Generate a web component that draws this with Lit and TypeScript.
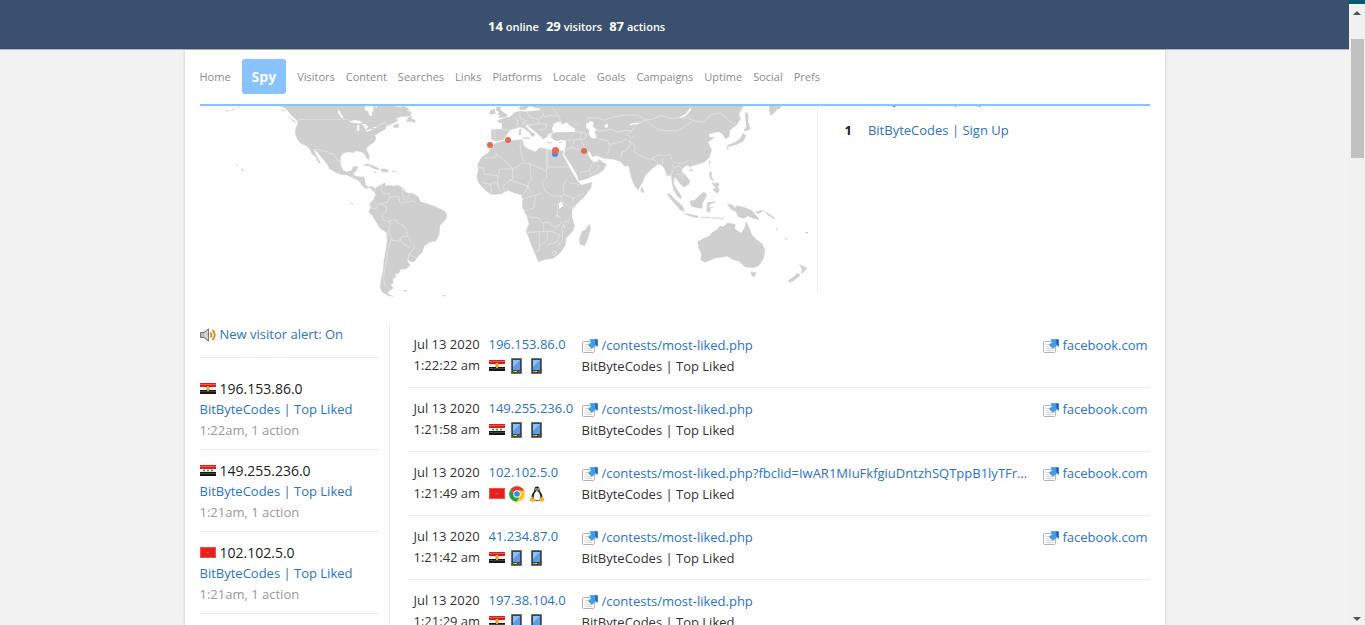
import { LitElement, html, svg, css } from "lit";
import { customElement, property } from "lit/decorators.js";

type Flag = "eg" | "iq" | "ma";

interface Action {
  time: string;
  ip: string;
  flag: Flag;
  agents: string[];
  url: string;
  referrer?: string;
}

const NAV = ["Home", "Spy", "Visitors", "Content", "Searches", "Links", "Platforms", "Locale", "Goals", "Campaigns", "Uptime", "Social", "Prefs"];

const VISITORS: { ip: string; flag: Flag; seen: string }[] = [
  { ip: "196.153.86.0", flag: "eg", seen: "1:22am, 1 action" },
  { ip: "149.255.236.0", flag: "iq", seen: "1:21am, 1 action" },
  { ip: "102.102.5.0", flag: "ma", seen: "1:21am, 1 action" },
];

const PAGE = "/contests/most-liked.php";
const ACTIONS: Action[] = [
  { time: "1:22:22 am", ip: "196.153.86.0", flag: "eg", agents: ["phone", "phone"], url: PAGE, referrer: "facebook.com" },
  { time: "1:21:58 am", ip: "149.255.236.0", flag: "iq", agents: ["phone", "phone"], url: PAGE, referrer: "facebook.com" },
  { time: "1:21:49 am", ip: "102.102.5.0", flag: "ma", agents: ["chrome", "linux"], url: PAGE + "?fbclid=IwAR1MIuFkfgiuDntzhSQTppB1lyTFrfIP…", referrer: "facebook.com" },
  { time: "1:21:42 am", ip: "41.234.87.0", flag: "eg", agents: ["phone", "phone"], url: PAGE, referrer: "facebook.com" },
  { time: "1:21:29 am", ip: "197.38.104.0", flag: "eg", agents: ["phone", "phone"], url: PAGE },
];

const flagIcon = (kind: Flag) => html`<svg class="flag" viewBox="0 0 16 11" aria-hidden="true">
  ${kind === "ma"
    ? svg`<rect width="16" height="11" fill="#e8201c"/><rect x=".5" y=".5" width="15" height="10" fill="none" stroke="#f4504a"/><path d="M8 3.400l.7 1.500h1.500L9 5.900l.5 1.600L8 6.600l-1.500.9.5-1.600-1.200-1h1.500z" fill="#b5562a"/>`
    : svg`<rect width="16" height="11" fill="#f4f4f4"/><rect width="16" height="4" fill="#e01b1b"/><rect y="1" width="16" height="1" fill="#f05a5a"/><rect y="7" width="16" height="4" fill="#161616"/><rect y="8" width="16" height="1" fill="#444"/>
      ${kind === "eg"
        ? svg`<path d="M6 4h4v3H6z" fill="#ecc766"/><path d="M7 3h2v5H7z" fill="#e3a92c"/>`
        : svg`<path d="M3 4h2v3H3zM7 4h2v3H7zM11 4h2v3h-2z" fill="#a9dcae"/><path d="M3 5h2v1H3zM7 5h2v1H7zM11 5h2v1h-2z" fill="#3fa54c"/>`}`}
</svg>`;

const agentIcon = (kind: string) => {
  if (kind === "chrome")
    return html`<svg class="agent" viewBox="0 0 16 16" aria-hidden="true">
      <circle cx="8" cy="8" r="7.800" fill="#fbc919"/>
      <path d="M8 8L1.200 4.200A7.800 7.800 0 0 0 7.500 15.800L11.300 9.500z" fill="#28a04b"/>
      <path d="M8 8L1.200 4.200A7.800 7.800 0 0 1 15 4.500H8z" fill="#e0392d"/>
      <circle cx="8" cy="8" r="3.700" fill="#fff"/><circle cx="8" cy="8" r="2.800" fill="#3f83ea"/>
    </svg>`;
  if (kind === "linux")
    return html`<svg class="agent" viewBox="0 0 16 16" aria-hidden="true">
      <path d="M8 .4c2 0 2.700 1.500 2.600 3.400 0 1.800 2.900 4 2.900 7.500 0 2.500-1.500 3.600-5.500 3.600s-5.500-1.100-5.500-3.600c0-3.500 2.900-5.700 2.900-7.500C5.300 1.900 6 .4 8 .4z" fill="#222"/>
      <path d="M8 5c1.500 0 3.300 3.500 3.300 6s-1.300 3.300-3.300 3.300-3.300-.8-3.300-3.300S6.500 5 8 5z" fill="#fafafa"/>
      <circle cx="7" cy="3" r=".8" fill="#fff"/><circle cx="9.200" cy="3" r=".8" fill="#fff"/>
      <path d="M6.600 4.200h3l-1.500 1.500z" fill="#f0a818"/>
      <path d="M3.300 10.500l2.900 3.600c0 1.800-2 2-3.300 1.300L.6 14.600l.8-2.900zM12.700 10.500l-2.900 3.600c0 1.800 2 2 3.300 1.300l2.500-1.200-1.200-2.500z" fill="#f3b325"/>
    </svg>`;
  return html`<svg class="agent" viewBox="0 0 16 16" aria-hidden="true">
    <rect x="2" y="0" width="11" height="16" rx="1" fill="#676f78"/>
    <rect x="3" y="1" width="9" height="14" fill="#3b434c"/>
    <rect x="4" y="2" width="7" height="10" fill="#5e9be0"/>
    <path d="M4 2h7L4 9z" fill="#8fc0f4"/>
    <rect x="4" y="13" width="2" height="1" fill="#72cf3a"/><rect x="6" y="13" width="2" height="1" fill="#e8e04a"/><rect x="9" y="13" width="2" height="1" fill="#e0392d"/>
  </svg>`;
};

const linkIcon = () => html`<svg class="goto" viewBox="0 0 16 14" aria-hidden="true">
  <rect x=".5" y="2.500" width="12" height="11" rx="1" fill="#fbfbfb" stroke="#b4b4b4"/>
  <path d="M3 5.500h4M3 7.500h3M3 9.500h7M3 11.500h7" stroke="#d9d9d9"/>
  <path d="M8 .5h7.500V7.500L13.500 6.200 9.800 9.500 6.300 5.900l3.300-2.600z" fill="#3da0e6" stroke="#2a86d0" stroke-width=".5"/>
  <path d="M13 .5h2.500v6.500l-2-1.500z" fill="#1f62bd"/>
</svg>`;

@customElement("world-map")
export class WorldMap extends LitElement {
  static styles = css`
    :host { display: block; }
    .map { display: block; width: 100%; }
    .land { fill: #cfcfcf; stroke: #cfcfcf; stroke-width: 1; stroke-linejoin: round; }
    .sea { fill: #fff; }
    .edge { fill: none; stroke: #eee; stroke-width: 1.6; stroke-linejoin: round; }
    .red { fill: #e26a57; }
    .blue { fill: #4c86de; }
  `;

  render() {
    return html`<svg class="map" viewBox="200 106 608 192" role="img" aria-label="Visitors on a world map">
      <g transform="translate(180 40) scale(.333333)">
        <path class="land" d="M300 198L318 205 325 215 338 230 352 242 354 250 347 265 346 280 352 298 362 310 380 318 390 328 396 342 408 352 413 364 421 372 420 366 412 352 405 338 401 328 412 336 420 347 430 358 443 374 448 386 470 398 485 404 500 405 515 412 528 418 540 426 545 436 558 446 566 442 576 448 580 456 586 445 576 439 566 441 556 434 554 420 552 410 540 411 525 407 520 400 530 390 534 379 520 380 515 391 500 396 488 390 481 370 482 350 488 340 505 336 520 338 528 333 546 336 555 345 562 357 568 358 566 342 558 328 565 318 580 308 588 298 585 286 600 276 615 268 620 258 640 250 655 240 645 236 662 230 690 228 694 216 680 212 688 208 672 198Z
          M680 246L684 234 694 227 696 238 706 240 704 248 694 244Z M640 256L655 252 656 262 642 264Z M303 206L316 214 308 212Z M325 228L343 242 350 250 338 242Z
          M549 375L562 371 580 377 598 386 596 390 582 386 568 378Z M602 388L614 386 628 393 618 397 604 394Z M638 393h8v3h-8z M580 394l8 1v3z
          M134 213L150 211 142 214Z M154 209L165 206 160 210Z M168 205L180 200 172 204Z M184 385L192 390 188 393Z M168 374l4 2v2z M512 490h6v2h-6z M670 752l12-1-4 4z M788 766h8v2h-8z"/>
        <path class="land" d="M583 454L590 442 604 434 616 429 616 440 622 436 640 438 656 436 668 445 680 458 700 461 714 470 722 486 745 492 770 502 795 514 801 525 796 540 780 556 778 582 768 602 750 606 733 618 727 636 712 652 702 666 690 664 681 654 684 666 690 676 680 686 662 688 656 700 645 702 648 710 638 718 640 728 632 734 640 744 626 754 622 762 640 769 625 767 607 757 600 742 604 715 610 690 612 660 618 630 622 600 620 578 600 565 588 545 576 526 566 515 572 503 569 490 580 480 587 465Z"/>
        <path class="sea" d="M556 198h24l2 10-6 8 0 12-8-2-4-12-10-4z M475 208l14 22 2 6-8-4-10-16z M508 246l14-6 18 3 8 6-14 1-12-1z M532 256l6-3 0 16-5 6-2-8z M544 252l12 0 8 8-6 10-4-8z M556 272l18-6 1 4-14 5z M576 262l14-2-4 4z M585 198l5 8 0-8z M640 198l20 4 8-4z"/>
        <path class="edge" d="M356 238h146l12 6M574 270l14-6 14-12 14-4 4 10M401 328l16 1 12 5h12l8 8 8-2 10 10 4 10 10 4M515 412l8-12M540 424l10-12M606 434l-3 14 8 12 16 0 2 14 14-6 14 2 2 14 6 6 12-4 14-2 10-2 6 8M668 446l-2 14 8 20M686 460l-2 16M572 503l14 4 12-18 20 10 2 14-14 10 4 18 18 4 4 8-6 18 3 14 8 18M627 544l18-6 6 10 18 8 10 14 4 20-10-2-12 6-2 10-26-4-4 12-5 20-5 30-5 28-4 26 4 14 4 10M659 598l10 12 18 12 4-4M687 590l4 14 12 12-2 12-14 14-2 14M687 642l16 10 8 6M627 474l-6 14-18 2"/>
      </g>
      <g transform="translate(460 95) scale(.333333)">
        <path class="land" d="M245 33H850L836 58 842 70 832 88 810 105 807 126 796 131 788 118 776 110 758 114 746 118 748 127 762 128 744 142 755 165 749 186 735 200 715 208 696 212 692 216 680 211 668 220 665 230 680 245 690 258 686 268 672 276 662 268 650 252 644 246 640 264 650 283 662 300 664 312 652 304 640 282 636 262 634 240 622 243 612 218 600 207 590 210 573 224 555 242 548 262 534 284 524 272 514 248 508 222 506 212 494 214 482 200 462 193 432 190 410 182 398 186 390 172 382 166 386 184 394 196 402 202 414 200 418 192 425 200 440 208 430 225 414 236 385 249 357 258 350 238 335 212 316 184 312 176 318 152 318 136 304 134 290 138 275 130 274 118 290 112 320 112 345 110 344 100 322 88 300 92 284 98 282 112 266 116 260 126 250 133 240 122 226 110 206 94 204 88 196 92 210 108 226 118 216 126 208 112 192 100 180 96 168 100 150 104 140 120 130 135 105 138 94 132 94 104 126 102 126 86 110 78 130 70 150 66 165 52 180 48 200 50 240 46Z
          M180 44L178 36 188 33H208L196 44Z M210 33h34v8l-14-2z"/>
        <path class="land" d="M110 35L124 36 120 42 128 50 142 60 138 66 114 68 122 60 112 58 118 52 108 44Z M88 58L92 46 104 42 106 56Z M928 33H964L960 40 950 44 940 56 932 61 928 48Z M856 50L864 56 864 80 870 98 860 100 857 78Z M852 108L858 96 872 100 864 106 856 108Z M850 114L858 122 850 138 832 148 816 152 800 156 804 150 826 142 840 132Z M800 156l6 6-4 2z M190 128h18v3h-18z M262 142h14v2h-14z M296 142l12-2-8 5z M178 104l5-2-1 18-6 0z
          M545 276L552 288 548 294 542 288Z M688 224l10-2-4 8z M748 196l4 4-4 12z M750 230L756 232 754 244 762 258 752 252 748 240Z M756 262l8 4 8-4 6 8-8 8-8-4z M758 284l14-8 6 8-4 10-8-2z
          M620 295L632 299 650 318 668 334 674 350 662 346 648 330 634 314Z M672 354L690 358 716 364 712 369 686 362Z M690 318L704 316 720 300 732 290 740 300 728 324 726 340 710 338 694 334Z M744 322l24-2-18 8-4 10 14-2-10 4 2 10-6-2-4 6-2-14z M722 366h28v2h-28z M754 368h28v2h-28z M782 372l12-6-10 8z
          M802 328L818 330 824 338 832 332 856 338 874 346 886 358 898 374 878 370 864 362 852 370 836 366 828 350 812 342Z M886 352l16-6 6 2-12 8z M908 344l8 6-4-2z M918 350l10 8 16 10-2 3-20-12z M948 398l6 6-2 2z M972 428l10 6-2 2z M1036 412h8v3h-8z"/>
        <path class="land" d="M713 440L732 430 750 422 757 412 770 405 780 393 790 396 802 384 826 388 824 402 844 414 853 400 860 380 866 396 870 405 876 420 890 434 906 446 915 464 911 490 896 512 880 518 855 516 836 498 820 494 802 484 765 490 735 502 722 495 724 476 716 458Z M872 530L888 533 884 545 876 542Z M1018 508L1030 514 1041 519 1032 530 1024 536 1026 524Z M984 557L1002 545 1014 534 1020 540 1000 558 988 562Z"/>
        <path class="land" d="M92 160L90 156 108 144 130 138 188 134 190 150 200 160 226 170 240 157 264 164 290 165 310 168 308 180 320 202 334 228 350 254 358 264 364 270 396 262 393 278 372 306 350 326 336 344 336 368 344 392 338 408 318 430 316 450 300 474 280 490 254 494 235 500 226 478 212 445 206 426 198 408 207 386 202 366 187 336 188 312 184 300 164 294 144 286 124 296 95 299 75 285 56 264 50 245 55 225 53 208 66 186 84 174Z M388 388L392 400 380 440 373 452 360 448 358 432 365 410 376 404Z"/>
        <path class="sea" d="M378 86L394 78 402 84 398 94 410 104 404 110 410 130 396 130 386 116 388 106 378 96Z M434 90l10-4v10l-10 2z M660 66l18-10 14-20 2 8-16 18-16 8z M296 324l10-4 4 12-12 10z M284 342l4 18 8 10-8-8z M310 384l6 18-6-10z M508 88l14-4 18-1v2l-30 6z M312 84l10-2-6 8z"/>
        <path class="edge" d="M72 190L108 188 108 174 160 222 188 204M160 222L118 222 116 248M188 134l-8 16 4 26 8 28 16 2 52 22V164M264 224V164M264 216h66M52 216l20 4v18l40 4 4 34M210 208l4 44-12 22 10 14M158 224v28l-30 20 6 20M260 228v20l-14 14 8 24 22 16 30 2M146 254l60 20-18 26M320 250l-10 24 0 24 30 12 34-16M358 272l-14-8-12 4M306 298l-4 24-10 10 0 30 12 8M340 308l-4 36M304 318l30 24M188 312l40-12 18-6M228 300l-8 40-28 6M206 366l30 2 10 16 20-2 14 14 20-8 6-10M250 384v26l-50 2M250 410h30l18-18M238 414v52l-12 4M262 414l0 20-24 20M280 412l20 8-10 22-28 6M306 394l2 38-14 20M310 380l20-2M276 474l10-6 4 8-10 6zM66 262l26 6 18-8 12 30M92 268l4 30"/>
        <path class="edge" d="M104 106l0 26M126 102l18 4M160 66l14 12-4 22M180 50l0 20 20 8-14 8 22 2M200 50l10 18 24 4 4 14-32 4M246 46l6 14-14 10M236 86l24 2-4 14-20 2M206 94l14-6M252 66l24-6 22 6 4 14-24 10M278 40l10 14 14 12M358 84l-10 10M376 84l8-16 36 2 12 6 28-10 34-6 38 0 22 12 22 2 26-12 36 8 36-4 30 12 24 4 26-24 26-4 30 24 12 10 6-6M560 74l16 18 24 14 52 2 26-16 18-12M404 104l26 4 22-6 22 10 20-6 22 2-16 10 14 12 10-8M516 108l12-18 30-16M416 132l26 4 8 20-8 24M450 148l30-6 16-10 10 6M482 190l4-18 14-8 12-16-4-12M510 138l16 18-4 14 36 22 14 0 24-12 20 2 12-4 12 22 16 6 18-4 14-8M576 192l10 4 8 14M608 190l0 18M634 206l8 12-8 22M642 218l16-6 16 24 12 14M650 238l18 2-2 12M344 110l24 2 12 6-4 14-34 2-22 2M366 112l-6 20 12 20 10 16M346 134l-12 24-16 6M336 158l20 6 22 2M398 202l-10 26-28 4M418 208l-6 20-24 10"/>
        <path class="sea" d="M276 100L284 84 300 80 306 88 322 84 332 94 344 102 344 109 320 108 296 110 278 110Z"/>
      </g>
      <circle class="blue" cx="555" cy="154" r="3"/>
      <circle class="red" cx="490" cy="145" r="3"/>
      <circle class="red" cx="508" cy="140" r="3"/>
      <circle class="red" cx="555.500" cy="150.500" r="3.500"/>
      <circle class="red" cx="584" cy="151" r="3"/>
    </svg>`;
  }
}

@customElement("app-root")
export class AppRoot extends LitElement {
  @property({ type: Boolean }) alertOn = true;

  static styles = css`
    :host {
      display: grid;
      grid-template-columns: minmax(0, 1fr) 16px;
      height: 100vh;
      overflow: hidden;
      background: #f2f2f2;
      color: #333;
      font-family: "Trebuchet MS", "Open Sans", sans-serif;
      font-size: 13px;
      line-height: 21px;
    }
    a { color: #2a74c7; text-decoration: none; }
    .page { display: flex; flex-direction: column; min-width: 0; overflow: hidden; }
    .top {
      flex: none;
      display: flex;
      gap: 7px;
      align-items: center;
      box-sizing: border-box;
      height: 50px;
      padding: 4px 0 0 488px;
      background: #3b506e;
      border-bottom: 1px solid #b4b9c0;
      color: #fff;
      font-size: 11px;
      font-weight: 600;
    }
    .count { font-size: 13px; font-weight: 700; }
    .sheet {
      flex: 1;
      min-height: 0;
      box-sizing: border-box;
      width: 100%;
      max-width: 980px;
      margin: 0 auto;
      padding: 0 15px;
      background: #fff;
      box-shadow: 0 0 3px rgba(0, 0, 0, 0.2);
    }
    .nav {
      display: flex;
      align-items: center;
      gap: 11px;
      box-sizing: border-box;
      height: 56px;
      padding-bottom: 1px;
      border-bottom: 2px solid #88c2ff;
      font-size: 11px;
    }
    .tab { color: #8c8c8c; }
    .current {
      padding: 7px 10px;
      border-radius: 3px;
      background: #88c2ff;
      color: #fff;
      font-size: 14px;
      font-weight: 700;
    }
    .overview { display: grid; grid-template-columns: minmax(0, 618px) minmax(0, 1fr); height: 217px; overflow: hidden; }
    .mapbox { height: 186px; padding-right: 9px; border-right: 1px solid #eee; }
    .recent { display: flex; flex-direction: column; gap: 10px; margin: -17px 0 0; padding: 0 0 0 27px; list-style: none; }
    .recent li { display: flex; gap: 16px; }
    .rank { font-weight: 700; color: #222; }
    .columns { display: grid; grid-template-columns: 190px minmax(0, 1fr); }
    .side { padding-right: 10px; border-right: 1px solid #eee; }
    .alert { display: flex; align-items: center; gap: 4px; box-sizing: border-box; height: 35px; padding-bottom: 11px; border-bottom: 1px solid #eee; }
    .people { margin: 0; padding: 10px 0 0; list-style: none; }
    .person { padding: 10px 0 8px; border-bottom: 1px solid #eee; }
    .ident { display: flex; align-items: center; gap: 4px; color: #222; font-size: 14px; }
    .seen { color: #999; }
    .log { margin: 0 0 0 18px; padding: 1px 0 0; list-style: none; }
    .entry {
      display: grid;
      grid-template-columns: 75px 93px minmax(0, 1fr) 107px;
      box-sizing: border-box;
      height: 64px;
      padding: 10px 0 10px 6px;
      border-bottom: 1px solid #eee;
    }
    .cell { min-width: 0; }
    .what { padding: 1px 12px 0 0; }
    .from { padding-top: 1px; }
    .line { display: flex; align-items: center; gap: 4px; height: 21px; white-space: nowrap; }
    .line a { overflow: hidden; text-overflow: ellipsis; white-space: nowrap; }
    .flag { flex: none; width: 16px; height: 11px; }
    .agent { flex: none; width: 16px; height: 16px; }
    .goto { flex: none; width: 16px; height: 14px; }
    .rail { display: flex; flex-direction: column; align-items: center; background: #f1f1f1; border-top: 4px solid #045a70; }
    .arrow { flex: none; width: 8px; height: 16px; fill: #505050; }
    .thumb { flex: none; width: 13px; height: 119px; margin: 19px 0 auto; background: #c1c1c1; }
  `;

  private toggle(event: Event) {
    event.preventDefault();
    this.alertOn = !this.alertOn;
  }

  render() {
    return html`
      <div class="page">
        <header class="top">
          <span><span class="count">14</span> online</span>
          <span><span class="count">29</span> visitors</span>
          <span><span class="count">87</span> actions</span>
        </header>
        <main class="sheet">
          <nav class="nav">
            ${NAV.map((name) => html`<a class=${name === "Spy" ? "tab current" : "tab"} href="#">${name}</a>`)}
          </nav>
          <section class="overview">
            <div class="mapbox"><world-map></world-map></div>
            <ol class="recent">
              <li><span class="rank">1</span><a href="#">BitByteCodes | Top Liked</a></li>
              <li><span class="rank">1</span><a href="#">BitByteCodes | Sign Up</a></li>
            </ol>
          </section>
          <div class="columns">
            <aside class="side">
              <div class="alert">
                <svg width="16" height="14" viewBox="0 0 16 14" aria-hidden="true">
                  <path d="M.5 4.500H4L8.500 .8V13.200L4 9.500H.5z" fill="#b9b9b9" stroke="#777"/>
                  <path d="M5 5v4M7 3v8" stroke="#e6e6e6"/>
                  <path d="M10.500 4.500q1.800 2.500 0 5M12.500 1.800q4.500 5.200 0 10.400" fill="none" stroke="#e8892b" stroke-width="2"/>
                </svg>
                <a href="#" @click=${this.toggle}>New visitor alert: ${this.alertOn ? "On" : "Off"}</a>
              </div>
              <ul class="people">
                ${VISITORS.map((v) => html`<li class="person">
                  <div class="ident">${flagIcon(v.flag)}${v.ip}</div>
                  <div><a href="#">BitByteCodes | Top Liked</a></div>
                  <div class="seen">${v.seen}</div>
                </li>`)}
              </ul>
            </aside>
            <ul class="log">
              ${ACTIONS.map((a) => html`<li class="entry">
                <div class="cell"><div class="line">Jul 13 2020</div><div class="line">${a.time}</div></div>
                <div class="cell">
                  <div class="line"><a href="#">${a.ip}</a></div>
                  <div class="line">${flagIcon(a.flag)}${a.agents.map(agentIcon)}</div>
                </div>
                <div class="cell what">
                  <div class="line">${linkIcon()}<a href="#">${a.url}</a></div>
                  <div class="line">BitByteCodes | Top Liked</div>
                </div>
                <div class="cell from">${a.referrer ? html`<div class="line">${linkIcon()}<a href="#">${a.referrer}</a></div>` : null}</div>
              </li>`)}
            </ul>
          </div>
        </main>
      </div>
      <div class="rail" aria-hidden="true">
        <svg class="arrow" viewBox="0 0 8 16"><path d="M0 11L4 7L8 11z"/></svg>
        <div class="thumb"></div>
        <svg class="arrow" viewBox="0 0 8 16"><path d="M0 8L4 12L8 8z"/></svg>
      </div>
    `;
  }
}
